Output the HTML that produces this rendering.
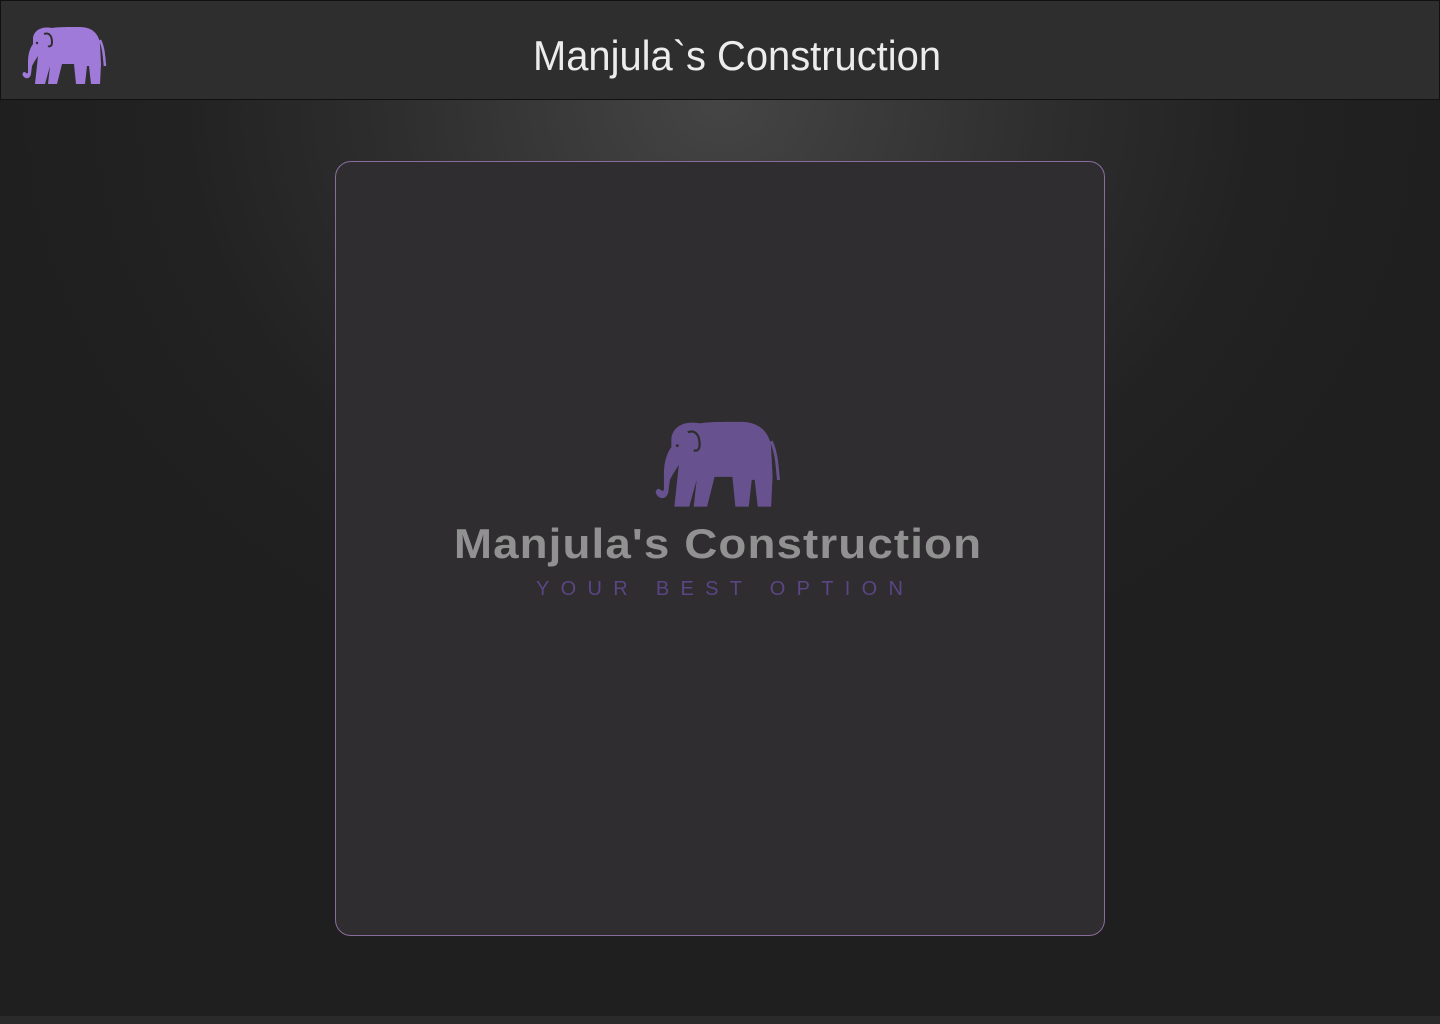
<!DOCTYPE html>
<html><head><meta charset="utf-8"><style>
html,body{margin:0;padding:0;}
body{width:1440px;height:1024px;overflow:hidden;position:relative;font-family:"Liberation Sans",sans-serif;
background:radial-gradient(ellipse 720px 620px at 720px 100px,#454545 0%,#2e2e2e 45%,#222 75%,#1f1f1f 100%),#1f1f1f;}
.hdr{position:absolute;left:0;top:0;width:1438px;height:98px;background:#2f2e2f;border:1px solid #111;}
.title{position:absolute;left:0;width:1474px;top:30px;text-align:center;color:#ececec;font-size:42px;line-height:52px;transform:scaleX(0.95);transform-origin:737px 0;}
.card{position:absolute;left:335px;top:161px;width:768px;height:773px;background:#2f2d2f;border:1px solid #8a6c9c;border-radius:16px;}
.name{position:absolute;left:0;width:1436px;top:521px;text-align:center;color:#919191;font-size:42px;font-weight:bold;line-height:46px;letter-spacing:1px;transform:scaleX(1.09);transform-origin:718px 0;}
.tag{position:absolute;left:536px;top:577px;color:#5a4585;font-size:20px;letter-spacing:11.3px;line-height:24px;white-space:nowrap;}
.bottom{position:absolute;left:0;top:1016px;width:1440px;height:8px;background:#2a2a2a;}
</style></head><body>
<div class="hdr"></div>
<svg style="position:absolute;left:22px;top:26px" width="86" height="60" viewBox="0 0 86 60">
<path fill="#a07ad9" d="M11 12 C12 4 20 0 30 2 C36 1 44 1 58 1 C70 1 77 8 78 18 L79 38 L78 58 L69 58 L67 40 L65 40 L63 58 L54 58 L52 38 L40 38 L35 58 L26 58 L28 40 L23 58 L13 58 L16 30 C14 33 12 36 10 40 L9 48 C8 53 4 53 2 51 C0 49 0 47 2 46 C4 46 4 48 6 47 L6 36 C6 28 8 22 11 18 Z"/>
<path d="M78 14 C82 22 82 32 83 40" stroke="#a07ad9" stroke-width="2.5" fill="none"/>
<path d="M22 8 C27 6 30 10 30 16 C30 20 28 21 26 20" stroke="#2f2e2f" stroke-width="2" fill="none"/>
<circle cx="15" cy="17" r="1.2" fill="#2f2e2f"/>
</svg>
<div class="title">Manjula`s Construction</div>
<div class="card"></div>
<svg style="position:absolute;left:655px;top:420px" width="128" height="90" viewBox="0 0 86 60">
<path fill="#67528f" d="M11 12 C12 4 20 0 30 2 C36 1 44 1 58 1 C70 1 77 8 78 18 L79 38 L78 58 L69 58 L67 40 L65 40 L63 58 L54 58 L52 38 L40 38 L35 58 L26 58 L28 40 L23 58 L13 58 L16 30 C14 33 12 36 10 40 L9 48 C8 53 4 53 2 51 C0 49 0 47 2 46 C4 46 4 48 6 47 L6 36 C6 28 8 22 11 18 Z"/>
<path d="M78 14 C82 22 82 32 83 40" stroke="#67528f" stroke-width="2" fill="none"/>
<path d="M22 8 C27 6 30 10 30 16 C30 20 28 21 26 20" stroke="#2f2d2f" stroke-width="1.5" fill="none"/>
<circle cx="15" cy="17" r="1" fill="#2f2d2f"/>
</svg>
<div class="name">Manjula's Construction</div>
<div class="tag">YOUR BEST OPTION</div>
<div class="bottom"></div>
</body></html>
